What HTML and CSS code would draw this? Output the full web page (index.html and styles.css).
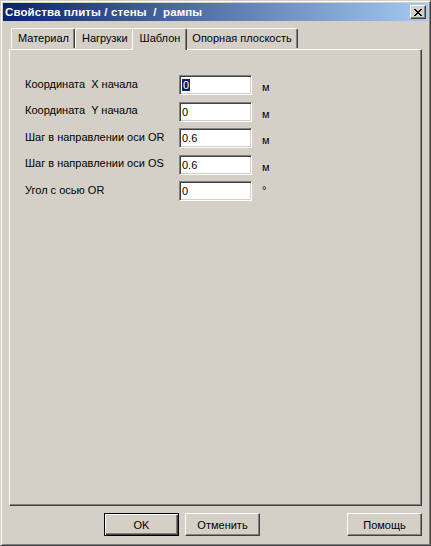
FILE: index.html
```html
<!DOCTYPE html>
<html lang="ru">
<head>
  <meta charset="UTF-8">
  <title>Свойства плиты / стены / рампы</title>
  <link rel="stylesheet" href="styles.css">
</head>
<body>

  <div class="window">
    <!-- Title bar -->
    <div class="titlebar">
      <span class="title">Свойства плиты / стены&nbsp; /&nbsp; рампы</span>
      <button class="close-btn">
        <svg width="8" height="7" viewBox="0 0 8 7">
          <path d="M0 0h2v1h1v1h2v-1h1v-1h2v1h-1v1h-1v1h-1v1h1v1h1v1h1v1h-2v-1h-1v-1h-2v1h-1v1h-2v-1h1v-1h1v-1h1v-1h-1v-1h-1v-1h-1z" fill="#000"/>
        </svg>
      </button>
    </div>

    <!-- Tabs -->
    <div class="tabs">
      <div class="tab">Материал</div>
      <div class="tab">Нагрузки</div>
      <div class="tab active">Шаблон</div>
      <div class="tab">Опорная плоскость</div>
    </div>

    <!-- Tab page -->
    <div class="panel">
      <div class="row">
        <label>Координата&nbsp; X начала</label>
        <div class="field"><span class="selected">0</span></div>
        <span class="unit">м</span>
      </div>
      <div class="row">
        <label>Координата&nbsp; Y начала</label>
        <div class="field">0</div>
        <span class="unit">м</span>
      </div>
      <div class="row">
        <label>Шаг в направлении оси OR</label>
        <div class="field">0.6</div>
        <span class="unit">м</span>
      </div>
      <div class="row">
        <label>Шаг в направлении оси OS</label>
        <div class="field">0.6</div>
        <span class="unit">м</span>
      </div>
      <div class="row">
        <label>Угол с осью OR</label>
        <div class="field">0</div>
        <span class="unit deg">°</span>
      </div>
    </div>

    <!-- Buttons -->
    <div class="buttons">
      <button class="btn default">OK</button>
      <button class="btn">Отменить</button>
      <button class="btn help">Помощь</button>
    </div>
  </div>

</body>
</html>
```

FILE: styles.css
```css
/* Global */
body {
  margin: 0;
  padding: 0;
  background: #d4d0c8;
  font-family: 'Liberation Sans', Arial, sans-serif;
  font-size: 11px;
  color: #000;
}

.window {
  width: 431px;
  height: 546px;
  box-sizing: border-box;
  background: #d4d0c8;
  border: 1px solid;
  border-color: #d4d0c8 #404040 #404040 #d4d0c8;
  box-shadow: inset 1px 1px #fff, inset -1px -1px #808080;
  padding: 2px;
  display: flex;
  flex-direction: column;
}

/* Title bar */
.titlebar {
  height: 18px;
  background: linear-gradient(to right, #0a246a, #a6caf0);
  display: flex;
  align-items: center;
  justify-content: space-between;
  padding: 0 2px 0 2px;
}

.title {
  color: #fff;
  font-weight: bold;
  font-size: 11.5px;
  letter-spacing: 0.1px;
}

.close-btn {
  width: 16px;
  height: 14px;
  padding: 0;
  margin: 0;
  background: #d4d0c8;
  border: 1px solid;
  border-color: #fff #404040 #404040 #fff;
  box-shadow: inset -1px -1px #808080;
  display: flex;
  align-items: center;
  justify-content: center;
}

/* Tabs */
.tabs {
  display: flex;
  align-items: flex-end;
  height: 28px;
  margin: 0 6px;
  padding-left: 2px;
  position: relative;
  z-index: 1;
}

.tab {
  height: 19px;
  line-height: 18px;
  padding: 0 5px 0 6px;
  border-top: 1px solid #fff;
  border-left: 1px solid #fff;
  border-right: 1px solid #404040;
  box-shadow: inset -1px 0 #808080;
  border-radius: 2px 2px 0 0;
  margin-bottom: 1px;
  white-space: nowrap;
}

.tab.active {
  height: 21px;
  line-height: 19px;
  margin: 0 -2px -1px -2px;
  padding: 0 6px 0 7px;
  background: #d4d0c8;
  position: relative;
  z-index: 2;
}

/* Tab page */
.panel {
  height: 457px;
  margin: 0 6px;
  box-sizing: border-box;
  border: 1px solid;
  border-color: #fff #404040 #404040 #fff;
  box-shadow: inset -1px -1px #808080;
  padding: 25px 0 0 15px;
}

.row {
  display: flex;
  align-items: center;
  height: 20px;
  margin-bottom: 6.5px;
}

.row label {
  width: 154px;
  margin-top: -3px;
}

.field {
  width: 73px;
  height: 20px;
  box-sizing: border-box;
  line-height: 16px;
  background: #fff;
  border: 1px solid;
  border-color: #808080 #fff #fff #808080;
  box-shadow: inset 1px 1px #404040, inset -1px -1px #d4d0c8;
  padding: 1px 0 0 2px;
}

.selected {
  background: #0a246a;
  color: #fff;
  outline: 1px dotted #fff;
  padding: 0 1px;
}

.unit {
  margin-left: 10px;
  margin-top: 4px;
}

.unit.deg {
  margin-top: -2px;
}

/* Buttons */
.buttons {
  display: flex;
  margin-top: 7px;
  padding-left: 101px;
}

.btn {
  width: 75px;
  height: 23px;
  padding: 0;
  font-family: 'Liberation Sans', Arial, sans-serif;
  font-size: 11px;
  color: #000;
  background: #d4d0c8;
  border: 1px solid;
  border-color: #fff #404040 #404040 #fff;
  box-shadow: inset -1px -1px #808080;
  margin-right: 6px;
}

.btn.default {
  border: 1px solid #000;
  box-shadow: inset 1px 1px #fff, inset -1px -1px #404040, inset -2px -2px #808080;
}

.btn.help {
  margin-left: auto;
  margin-right: 6px;
}
```
